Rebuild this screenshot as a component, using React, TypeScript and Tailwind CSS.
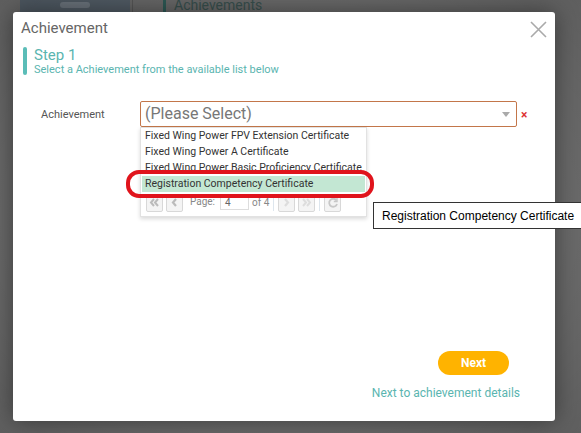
import React from "react";

const font = { fontFamily: "Roboto, 'Open Sans', Arial, sans-serif" };

function Pager() {
  const btn = "w-[17px] h-[18px] border border-[#d8d8d8] rounded-[2px] bg-[#f4f4f4] flex items-center justify-center text-[#c8c8c8]";
  return (
    <div className="flex items-center h-[21px] pl-[5px] gap-[3px] text-[10px] text-[#888]">
      <div className={btn}>
        <svg width="11" height="11" viewBox="0 0 11 11"><path d="M5 2 L2 5.5 L5 9 M9 2 L6 5.5 L9 9" stroke="#bbb" strokeWidth="2" fill="none" /></svg>
      </div>
      <div className={btn}>
        <svg width="11" height="11" viewBox="0 0 11 11"><path d="M7 2 L4 5.5 L7 9" stroke="#bbb" strokeWidth="2.2" fill="none" /></svg>
      </div>
      <span className="ml-[4px] -mt-[3px]">Page:</span>
      <div className="w-[29px] h-[15px] border border-[#ddd] bg-white text-[10px] text-[#666] pl-[4px] leading-[13px] ml-[2px]">4</div>
      <span className="-mt-[1px]">of 4</span>
      <div className="w-px h-[17px] bg-[#dde6ee] mx-[1px]" />
      <div className={btn}>
        <svg width="11" height="11" viewBox="0 0 11 11"><path d="M4 2 L7 5.5 L4 9" stroke="#ddd" strokeWidth="2.2" fill="none" /></svg>
      </div>
      <div className={btn}>
        <svg width="11" height="11" viewBox="0 0 11 11"><path d="M2 2 L5 5.5 L2 9 M6 2 L9 5.5 L6 9" stroke="#ddd" strokeWidth="2" fill="none" /></svg>
      </div>
      <div className="w-px h-[17px] bg-[#dde6ee] mx-[1px]" />
      <div className={btn}>
        <svg width="12" height="12" viewBox="0 0 12 12"><path d="M9.5 3.5 A4 4 0 1 0 10 7" stroke="#c8c8c8" strokeWidth="1.8" fill="none" /><path d="M10 1 L10 4.5 L6.8 4.5" stroke="#c8c8c8" strokeWidth="1.4" fill="none" /></svg>
      </div>
    </div>
  );
}

export default function App() {
  const items = [
    "Fixed Wing Power FPV Extension Certificate",
    "Fixed Wing Power A Certificate",
    "Fixed Wing Power Basic Proficiency Certificate",
  ];
  return (
    <div className="relative w-[581px] h-[433px] overflow-hidden bg-[#6c6c6c]" style={font}>
      {/* background page */}
      <div className="absolute left-[20px] top-0 w-[110px] h-[14px] bg-[#55606a]">
        <div className="absolute left-[40px] top-[2px] w-[30px] h-[6px] rounded-full bg-[#727b84]" />
      </div>
      <div className="absolute left-[132px] top-0 w-px h-[14px] bg-[#5a5a5a]" />
      <div className="absolute left-[163px] top-0 w-[3px] h-[14px] bg-[#2f5d58]" />
      <div className="absolute left-[174px] top-[-3px] text-[14px] leading-[16px] text-[#3a5250]">Achievements</div>
      <div className="absolute inset-0 bg-[radial-gradient(ellipse_at_center,transparent_60%,rgba(0,0,0,0.12))]" />

      {/* modal */}
      <div className="absolute left-[13px] top-[12px] w-[542px] h-[409px] bg-white rounded-[3px] shadow-[0_0_24px_rgba(0,0,0,0.45)]">
        <div className="flex items-center justify-between pl-[8px] pr-[8px] pt-[5px] h-[28px]">
          <span className="text-[15px] text-[#666]">Achievement</span>
          <svg width="17" height="17" viewBox="0 0 17 17" className="mt-[2px]">
            <path d="M1 1 L16 16 M16 1 L1 16" stroke="#aaa" strokeWidth="1.6" />
          </svg>
        </div>

        <div className="flex gap-[7px] ml-[10px] mt-[7px]">
          <div className="w-[4px] h-[28px] rounded-[2px] bg-[#5bbdb8]" />
          <div className="flex flex-col -mt-[1px]">
            <span className="text-[15px] leading-[18px] text-[#5ab5b0]">Step 1</span>
            <span className="text-[11px] leading-[12px] text-[#5ab5b0]">Select a Achievement from the available list below</span>
          </div>
        </div>

        <div className="flex items-start mt-[25px] ml-[28px]">
          <span className="w-[99px] text-[11px] text-[#555] mt-[6px]">Achievement</span>
          <div className="relative">
            <div className="w-[377px] h-[26px] border border-[#c3764a] rounded-[2px] flex items-center justify-between pl-[4px] pr-[6px]">
              <span className="text-[16px] text-[#777]">(Please Select)</span>
              <svg width="8" height="5" viewBox="0 0 8 5"><path d="M0 0 L8 0 L4 5 Z" fill="#aaa" /></svg>
            </div>
            <div className="absolute left-0 top-[26px] w-[227px] bg-white border border-[#e2e2e2] shadow-[0_2px_4px_rgba(0,0,0,0.15)] pb-[3px] z-10">
              {items.map((t) => (
                <div key={t} className="h-[16px] px-[4px] text-[10.5px] leading-[16px] text-[#333] whitespace-nowrap overflow-hidden">{t}</div>
              ))}
              <div className="h-[16px] mx-[1px] px-[3px] text-[10.5px] leading-[16px] text-[#333] bg-[#c3e7d3]">Registration Competency Certificate</div>
              <Pager />
            </div>
          </div>
          <span className="ml-[4px] mt-[5px] text-[12px] font-bold text-[#d33]">×</span>
        </div>

        <div className="absolute right-[46px] top-[339px] w-[71px] h-[24px] rounded-full bg-[#ffb300] flex items-center justify-center text-[12px] font-bold text-white">Next</div>
        <div className="absolute right-[35px] top-[372px] text-[12px] text-[#5ab5b0]">Next to achievement details</div>
      </div>

      {/* red annotation */}
      <div className="absolute left-[126px] top-[170px] w-[248px] h-[28px] rounded-[13px] border-[4px] border-[#e0141c] z-20" />

      {/* tooltip */}
      <div className="absolute left-[373px] top-[202px] h-[27px] pl-[8px] pr-[10px] bg-white border border-[#333] flex items-center text-[12px] text-black whitespace-nowrap z-20" style={{ fontFamily: "'Liberation Sans', Arial, sans-serif" }}>
        Registration Competency Certificate
      </div>
    </div>
  );
}
